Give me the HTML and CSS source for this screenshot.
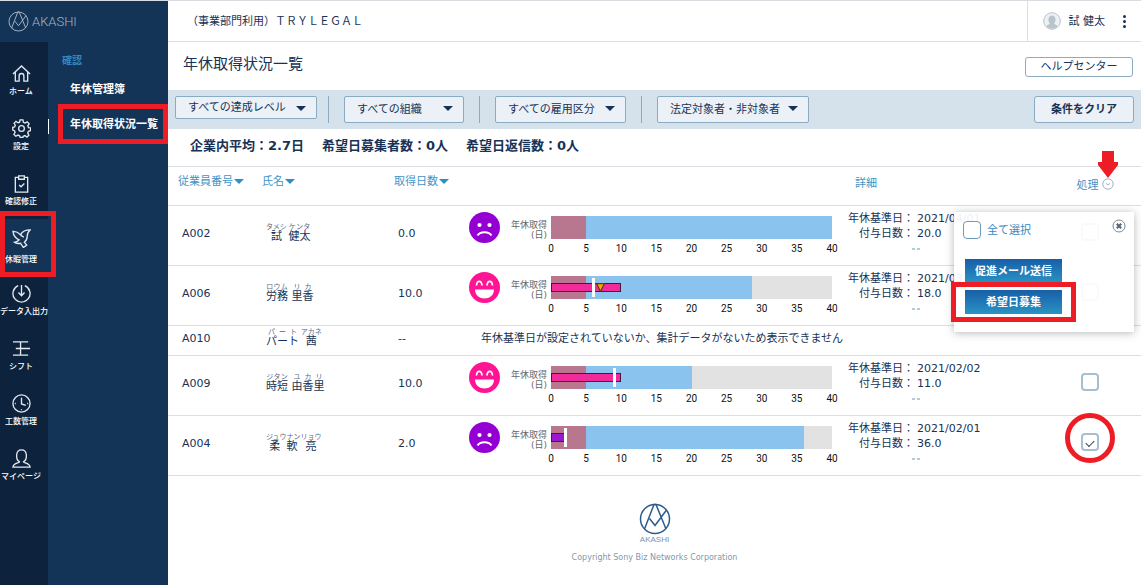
FILE: index.html
```html
<!DOCTYPE html>
<html lang="ja">
<head>
<meta charset="utf-8">
<title>年休取得状況一覧 - AKASHI</title>
<meta name="viewport" content="width=device-width, initial-scale=1">
<link rel="stylesheet" href="styles.css">
</head>
<body>
<svg class="defs" aria-hidden="true">
  <symbol id="mark" viewBox="0 0 32 32">
    <circle cx="16" cy="16" r="14.5"/>
    <path d="M5.500 26 15 1.500h2L27 26M10.500 15.500 16 22.500 27.500 7"/>
  </symbol>
  <symbol id="sad" viewBox="0 0 31 31">
    <circle cx="15.500" cy="15.500" r="15.500" fill="#9400d3"/>
    <circle cx="10.500" cy="13" r="2.100" fill="#fff"/><circle cx="20.500" cy="13" r="2.100" fill="#fff"/>
    <path d="M8.500 23.500c2.500-4.500 11.500-4.500 14 0" fill="none" stroke="#fff" stroke-width="2"/>
  </symbol>
  <symbol id="happy" viewBox="0 0 31 31">
    <circle cx="15.500" cy="15.500" r="15.500" fill="#ff1493"/>
    <path d="M7.500 13.500c.5-5.500 5-5.500 5.500 0M18 13.500c.5-5.500 5-5.500 5.500 0" fill="none" stroke="#fff" stroke-width="1.700"/>
    <path d="M6 17.500h19c0 12-19 12-19 0z" fill="#fff"/>
  </symbol>
</svg>
<div class="app">
  <aside class="side">
    <a class="brand" href="#" aria-label="AKASHI"><svg class="brand-mark" aria-hidden="true"><use href="#mark"/></svg><span>AKASHI</span></a>
    <div class="side-body">
      <nav class="rail" aria-label="メイン">
        <a href="#"><svg viewBox="0 0 20 20"><path d="M1 10.500 10 2l9 8.500M3.500 8.500V18h4v-5.500a2.500 2.500 0 0 1 5 0V18h4V8.500"/></svg><span>ホーム</span></a>
        <a class="marked" href="#"><svg viewBox="0 0 20 20"><circle cx="10" cy="10" r="3"/><path d="M8.500 1h3l.5 2.500 1.800.8L16 3l2 2-1.400 2.200.8 1.800 2.100.4v2.900l-2.200.6-.8 1.700L17.800 17l-2 2-2.200-1.500-1.700.7-.5 1.300H8.600L8 17.700l-1.800-.8L4 18.200l-2-2L3.300 14l-.7-1.700L.8 11.700V8.800l2-.5.7-1.700L2.200 4.500l2-2 2.200 1.400 1.600-.6z"/></svg><span>設定</span></a>
        <a href="#"><svg viewBox="0 0 20 20"><path d="M7 3.500H3.500V19h13V3.500H13M7 2h6v3.500H7zM7.500 11.500l2 2 3.500-3.500"/></svg><span>確認修正</span></a>
        <a class="current" href="#" aria-current="page"><svg viewBox="0 0 20 20"><path d="M1 2.500c3-.3 5.500 1 8 3.500 2-3.500 5-5 10-5-2.500 2-3 4-3 7 0 2.500-1 4.500-3 6l2.500 3-3.500 2.500-3-4.500c-2.500.5-5 .3-6.500-1C5 13.700 6.500 13 7.500 11.500 4 10 1.500 6.500 1 2.500z"/><path d="M9 6c.8 1.300 2 2.200 3.500 2.500"/></svg><span>休暇管理</span></a>
        <a href="#"><svg viewBox="0 0 20 20"><path d="M6.500 1.700a9 9 0 1 0 7 0M10 1v11M6.800 9l3.200 3.300L13.200 9"/></svg><span>データ入出力</span></a>
        <a href="#"><svg viewBox="0 0 20 20"><path d="M1 3h16M4 10h15M1 17h16M9 3v14"/></svg><span>シフト</span></a>
        <a href="#"><svg viewBox="0 0 20 20"><circle cx="10" cy="10" r="9"/><path d="M10 4v6.500l4.500 1.500M3 10h1M16 10h1M10 16v1"/></svg><span>工数管理</span></a>
        <a href="#"><svg viewBox="0 0 20 20"><path d="M8 13.500C3.500 11 3.500 1 10 1s6.500 10 2 12.500c0 1.500 6.500 1 7 5.500H1c.5-4.500 7-4 7-5.500z"/></svg><span>マイページ</span></a>
      </nav>
      <nav class="submenu" aria-label="確認">
        <h2>確認</h2>
        <a href="#">年休管理簿</a>
        <a class="boxed" href="#">年休取得状況一覧</a>
      </nav>
    </div>
  </aside>
  <div class="main">
    <header class="topbar">
      <span class="company">（事業部門利用）ＴＲＹＬＥＧＡＬ</span>
      <div class="user">
        <svg class="avatar" viewBox="0 0 18 18" aria-hidden="true"><circle cx="9" cy="9" r="8.300" fill="#eef1f3" stroke="#b9c3ca"/><path d="M6.800 11.500C4.500 9 5 3.500 9 3.500s4.500 5.500 2.200 8c.3 1.200 2.800 1 3.300 2.700-2.700 3.300-8.300 3.300-11 0 .5-1.700 3-1.500 3.300-2.700z" fill="#b9c3ca"/></svg>
        <span>試 健太</span>
        <button class="more" type="button" aria-label="メニュー"><i></i><i></i><i></i></button>
      </div>
    </header>
    <div class="titlebar">
      <h1>年休取得状況一覧</h1>
      <button class="help" type="button">ヘルプセンター</button>
    </div>
    <form class="filters">
      <span class="pick pick-level"><select aria-label="達成レベル"><option>すべての達成レベル</option></select></span>
      <span class="pick pick-org"><select aria-label="組織"><option>すべての組織</option></select></span>
      <span class="pick pick-type"><select aria-label="雇用区分"><option>すべての雇用区分</option></select></span>
      <span class="pick pick-target"><select aria-label="対象者"><option>法定対象者・非対象者</option></select></span>
      <button class="clear" type="reset">条件をクリア</button>
    </form>
    <p class="summary"><span>企業内平均：2.7日</span><span>希望日募集者数：0人</span><span>希望日返信数：0人</span></p>
    <div class="list">
      <table>
        <colgroup><col class="c-id"><col class="c-name"><col class="c-days"><col><col class="c-detail"><col class="c-act"></colgroup>
        <thead>
          <tr><th class="sort">従業員番号</th><th class="sort">氏名</th><th class="sort">取得日数</th><th></th><th class="th-detail">詳細</th>
          <th class="th-act">処理<button class="expand" type="button" aria-label="処理メニュー"><svg viewBox="0 0 12 12"><circle cx="6" cy="6" r="5.200"/><path d="M4 5.200 6 7l2-1.800"/></svg></button>
            <svg class="arrow" viewBox="0 0 20 27" aria-hidden="true"><path d="M4 0h12v11h4v3L10 27 0 14v-3h4z"/></svg></th></tr>
        </thead>
        <tbody>
          <tr>
            <td>A002</td><td><ruby>試<rt>タメシ</rt></ruby> <ruby>健太<rt>ケンタ</rt></ruby></td><td>0.0</td>
            <td><div class="graph"><svg class="face"><use href="#sad"/></svg><span class="axis">年休取得<br>(日)</span>
              <div class="plot"><div class="bar"><b class="duty"></b><b class="granted" style="width:87.5%"></b></div>
              <div class="scale"><i>0</i><i>5</i><i>10</i><i>15</i><i>20</i><i>25</i><i>30</i><i>35</i><i>40</i></div></div></div></td>
            <td><dl><dt>年休基準日：</dt><dd>2021/04/01</dd><dt>付与日数：</dt><dd>20.0</dd></dl><svg class="dots" viewBox="0 0 8 3"><path d="M0 0h3v2H0zM5 0h3v2H5z"/></svg></td>
            <td><input type="checkbox" aria-label="A002を選択"></td>
          </tr>
          <tr>
            <td>A006</td><td><ruby>労務<rt>ロウム</rt></ruby> <ruby>里香<rt>リカ</rt></ruby></td><td>10.0</td>
            <td><div class="graph"><svg class="face"><use href="#happy"/></svg><span class="axis">年休取得<br>(日)</span>
              <div class="plot"><div class="bar"><b class="duty"></b><b class="granted" style="width:58.9%"></b><b class="taken" style="width:25%"></b><b class="goal" style="left:15%"></b><svg class="now" style="left:17.5%" viewBox="0 0 8 8"><path d="M.5.5h7L4 7.500z"/></svg></div>
              <div class="scale"><i>0</i><i>5</i><i>10</i><i>15</i><i>20</i><i>25</i><i>30</i><i>35</i><i>40</i></div></div></div></td>
            <td><dl><dt>年休基準日：</dt><dd>2021/03/01</dd><dt>付与日数：</dt><dd>18.0</dd></dl><svg class="dots" viewBox="0 0 8 3"><path d="M0 0h3v2H0zM5 0h3v2H5z"/></svg></td>
            <td><input type="checkbox" aria-label="A006を選択"></td>
          </tr>
          <tr class="short">
            <td>A010</td><td><ruby>パート<rt>パート</rt></ruby> <ruby>茜<rt>アカネ</rt></ruby></td><td>--</td>
            <td class="message" colspan="3">年休基準日が設定されていないか、集計データがないため表示できません</td>
          </tr>
          <tr>
            <td>A009</td><td><ruby>時短<rt>ジタン</rt></ruby> <ruby>由香里<rt>ユカリ</rt></ruby></td><td>10.0</td>
            <td><div class="graph"><svg class="face"><use href="#happy"/></svg><span class="axis">年休取得<br>(日)</span>
              <div class="plot"><div class="bar"><b class="duty"></b><b class="granted" style="width:37.5%"></b><b class="taken" style="width:25%"></b><b class="goal" style="left:22.5%"></b></div>
              <div class="scale"><i>0</i><i>5</i><i>10</i><i>15</i><i>20</i><i>25</i><i>30</i><i>35</i><i>40</i></div></div></div></td>
            <td><dl><dt>年休基準日：</dt><dd>2021/02/02</dd><dt>付与日数：</dt><dd>11.0</dd></dl><svg class="dots" viewBox="0 0 8 3"><path d="M0 0h3v2H0zM5 0h3v2H5z"/></svg></td>
            <td><input type="checkbox" aria-label="A009を選択"></td>
          </tr>
          <tr>
            <td>A004</td><td><ruby>柔軟<rt>ジュウナン</rt></ruby> <ruby>亮<rt>リョウ</rt></ruby></td><td>2.0</td>
            <td><div class="graph"><svg class="face"><use href="#sad"/></svg><span class="axis">年休取得<br>(日)</span>
              <div class="plot"><div class="bar"><b class="duty"></b><b class="granted" style="width:77.5%"></b><b class="taken low" style="width:5%"></b><b class="goal" style="left:5%"></b></div>
              <div class="scale"><i>0</i><i>5</i><i>10</i><i>15</i><i>20</i><i>25</i><i>30</i><i>35</i><i>40</i></div></div></div></td>
            <td><dl><dt>年休基準日：</dt><dd>2021/02/01</dd><dt>付与日数：</dt><dd>36.0</dd></dl><svg class="dots" viewBox="0 0 8 3"><path d="M0 0h3v2H0zM5 0h3v2H5z"/></svg></td>
            <td class="ringed"><input type="checkbox" aria-label="A004を選択" checked></td>
          </tr>
        </tbody>
      </table>
      <div class="popover" role="dialog" aria-label="処理">
        <div class="pop-head">
          <label><input type="checkbox">全て選択</label>
          <button class="close" type="button" aria-label="閉じる"><svg viewBox="0 0 14 14"><circle cx="7" cy="7" r="6" fill="none" stroke="#7b8792"/><path d="m4.800 4.800 4.400 4.400M9.200 4.800 4.800 9.200" stroke="#5c6874" stroke-width="2.200"/></svg></button>
        </div>
        <button class="action" type="button">促進メール送信</button>
        <button class="action boxed" type="button">希望日募集</button>
      </div>
    </div>
    <footer>
      <svg class="foot-mark" aria-hidden="true"><use href="#mark"/></svg>
      <span class="foot-name">AKASHI</span>
      <small>Copyright Sony Biz Networks Corporation</small>
    </footer>
  </div>
</div>
</body>
</html>
```
FILE: styles.css
```css
*, *::before, *::after { box-sizing: border-box; }

body {
  margin: 0;
  color: #163256;
  background: #fff;
  font: 11px/15px "DejaVu Sans", "Noto Sans CJK JP", sans-serif;
}

a { color: inherit; text-decoration: none; }
h1, h2, p, dl, dd { margin: 0; }
i { font-style: normal; }

button, select, input { font: inherit; color: inherit; }
button { padding: 0; cursor: pointer; }

.defs { position: absolute; width: 0; height: 0; }

.app {
  display: flex;
  min-height: 100vh;
  border-top: 1px solid #d9dce1;
}

/* Sidebar */
.side {
  flex: none;
  display: flex;
  flex-direction: column;
  width: 168px;
  color: #fff;
  background: #133457;
}

.brand {
  display: flex;
  align-items: center;
  gap: 3px;
  height: 41px;
  padding-left: 8px;
  color: #a3b2c3;
  font: 300 13px/16px Roboto, sans-serif;
}

.brand-mark { width: 21px; height: 21px; fill: none; stroke: #a3b2c3; stroke-width: 1.5; }

.side-body { flex: 1; display: flex; }

.rail {
  width: 48px;
  padding-top: 12px;
  background: #0d233d;
  font-size: 8px;
  font-weight: 500;
  line-height: 12px;
}

.rail a {
  position: relative;
  display: flex;
  flex-direction: column;
  align-items: safe center;
  gap: 3px;
  height: 55px;
  padding: 10px 6px 0 0;
  white-space: nowrap;
}

.rail svg { flex: none; width: 19px; height: 19px; fill: none; stroke: #e4e9ee; stroke-width: 1.4; }

.rail .marked::after {
  content: "";
  position: absolute;
  top: 10px;
  right: -1px;
  width: 1px;
  height: 15px;
  background: #fff;
}

.rail .current { gap: 6px; background: #133457; }

.rail .current::after {
  content: "";
  position: absolute;
  inset: -8px -8px -3px 0;
  z-index: 2;
  border: 5px solid #ee1c24;
}

.submenu { flex: 1; padding-top: 11px; font-weight: 700; }
.submenu h2 { padding-left: 14px; color: #3687bd; font-size: 10px; line-height: 15px; }
.submenu a { position: relative; display: block; padding: 10px 0 10px 22px; white-space: nowrap; }
.submenu h2 + a { padding-top: 14px; }

.submenu .boxed::after {
  content: "";
  position: absolute;
  inset: -3px 0 -2px 10px;
  border: 5px solid #ee1c24;
}

/* Header */
.main { flex: 1; min-width: 0; }

.topbar {
  display: flex;
  justify-content: space-between;
  height: 41px;
  padding-left: 19px;
  border-bottom: 1px solid #dbdfe5;
}

.company { align-self: center; }

.user {
  display: flex;
  align-items: center;
  gap: 8px;
  padding: 0 13px 0 15px;
  border-left: 1px solid #dbdfe5;
}

.avatar { width: 18px; height: 18px; }

.more {
  display: grid;
  gap: 2px;
  margin-left: 8px;
  padding: 2px;
  border: 0;
  background: none;
}

.more i { width: 3px; height: 3px; border-radius: 50%; background: #163256; }

.titlebar {
  display: flex;
  align-items: flex-start;
  justify-content: space-between;
  height: 48px;
  padding: 11px 8px 0 15px;
}

h1 { font-size: 15px; font-weight: 400; line-height: 22px; }

.help, .clear { border: 1px solid #8aabc2; border-radius: 3px; background: #fff; }
.help { width: 108px; height: 20px; margin-top: 4px; line-height: 16px; }

/* Filters */
.filters {
  display: flex;
  align-items: flex-start;
  height: 39px;
  padding: 6px 7px;
  background: #d5e2eb;
}

.pick { position: relative; display: flex; }

.pick + .pick { margin-left: 15px; padding-left: 15px; border-left: 1px solid #8aabc2; }
.pick + .pick-org { margin-left: 11px; }

.pick::after {
  content: "";
  position: absolute;
  top: 10px;
  right: 11px;
  border: solid transparent;
  border-width: 5px 5px 0;
  border-top-color: #163256;
  pointer-events: none;
}

.pick select {
  appearance: none;
  height: 27px;
  padding: 0 12px;
  border: 1px solid #8aabc2;
  border-radius: 2px;
  background: #ebf1f6;
}

.pick-level select { width: 142px; height: 23px; }
.pick-org select { width: 120px; }
.pick-type select { width: 131px; }
.pick-target select { width: 152px; }

.clear { width: 100px; height: 27px; margin-left: auto; background: #ebf1f6; font-weight: 700; line-height: 20px; }

.summary {
  display: flex;
  gap: 18px;
  height: 37px;
  padding: 8px 22px;
  font-size: 13px;
  font-weight: 700;
  line-height: 18px;
}

/* Employee list */
.list { position: relative; border-top: 1px solid #dbdfe5; }

table { width: 100%; border-collapse: collapse; table-layout: fixed; }
.c-id { width: 94px; }
.c-name { width: 128px; }
.c-days { width: 76px; }
.c-detail { width: 198px; }
.c-act { width: 103px; }

th {
  height: 38px;
  padding: 0 0 8px;
  border-bottom: 1px solid #dbdfe5;
  color: #4593c3;
  font-weight: 400;
  text-align: left;
  white-space: nowrap;
}

.sort:first-child { padding-left: 10px; }
.sort:nth-child(3) { padding-left: 4px; }

.sort::after {
  content: "";
  display: inline-block;
  margin-left: 1px;
  border: solid transparent;
  border-width: 5px 5px 0;
  border-top-color: #2b8fc9;
  vertical-align: 1px;
}

.th-detail { padding: 0 0 4px 15px; }
.th-act { position: relative; padding: 0 0 0 11px; text-align: center; }

.expand { margin-left: 3px; border: 0; background: none; vertical-align: -1px; }
.expand svg { display: block; width: 12px; height: 12px; fill: none; stroke: #9fb4c2; }

.arrow { position: absolute; top: -16px; right: 23px; width: 20px; height: 27px; fill: #ee1c24; }

td { height: 60px; padding: 0 0 3px; border-bottom: 1px solid #dbdfe5; }
.short td { height: 30px; }
td:first-child { padding-left: 14px; }
td:nth-child(2) { padding-left: 4px; }
td:nth-child(3) { padding-left: 8px; }
td:nth-child(4) { padding-bottom: 0; }
td:nth-child(5) { padding-top: 5px; vertical-align: top; }
td:nth-child(6) { padding-bottom: 6px; text-align: center; }
td.message { padding: 0 0 3px 15px; }

ruby { ruby-align: space-around; }
rt { color: #5d6b80; font-size: 7px; line-height: 8px; }

.graph { display: flex; height: 59px; padding: 6px 8px 0 3px; }
.face { flex: none; width: 31px; height: 31px; }

.axis {
  flex: none;
  width: 51px;
  padding: 8px 4px 0 0;
  color: #666;
  font-size: 9px;
  line-height: 10px;
  text-align: right;
}

.plot { flex: 1; padding-top: 4px; }
.bar { position: relative; display: flex; height: 23px; background: #e2e2e2; }
.duty { width: 12.5%; background: #b8768f; }
.granted { background: #8bc3ef; }

.taken {
  position: absolute;
  top: 7px;
  left: 0;
  height: 9px;
  border: 1px solid #4c1440;
  background: #f02c9b;
}

.taken.low { background: #9b19cd; }

.goal { position: absolute; top: 2px; width: 3px; height: 19px; margin-left: -1px; background: #fff; }

.now {
  position: absolute;
  top: 7px;
  width: 9px;
  height: 9px;
  margin-left: -4px;
  fill: #ffa500;
  stroke: #5a3a10;
}

.scale {
  display: flex;
  justify-content: space-between;
  padding-top: 4px;
  color: #111;
  font: 10px/12px Roboto, sans-serif;
}

.scale i { display: flex; justify-content: center; width: 0; }

dl { display: grid; grid-template-columns: 74px 1fr; column-gap: 3px; }
dt { text-align: right; white-space: nowrap; }
.dots { display: block; width: 8px; height: 3px; margin: 7px 0 0 72px; fill: #b3cbd9; }

input[type="checkbox"] {
  appearance: none;
  display: inline-grid;
  place-items: center;
  width: 18px;
  height: 18px;
  margin: 0;
  border: 2px solid #a5bfd0;
  border-radius: 4px;
  background: #fff;
  vertical-align: middle;
}

input[type="checkbox"]:checked::after {
  content: "";
  width: 8px;
  height: 5px;
  border: solid #2a4260;
  border-width: 0 0 1px 1px;
  transform: rotate(-45deg);
}

.ringed { position: relative; }

.ringed::after {
  content: "";
  position: absolute;
  top: 50%;
  left: 50%;
  width: 50px;
  height: 50px;
  margin: -32px 0 0 -25px;
  border: 5px solid #ee1c24;
  border-radius: 50%;
  pointer-events: none;
}

/* Bulk action popover */
.popover {
  position: absolute;
  top: 45px;
  right: 7px;
  display: flex;
  flex-direction: column;
  align-items: flex-start;
  gap: 7px;
  width: 180px;
  height: 120px;
  padding: 9px 8px 18px 9px;
  background: rgba(255, 255, 255, .92);
  box-shadow: 0 1px 8px rgba(40, 50, 60, .35);
}

.pop-head {
  flex: 1;
  align-self: stretch;
  display: flex;
  justify-content: space-between;
  align-items: flex-start;
}

.pop-head label { display: flex; align-items: center; gap: 6px; color: #3489c0; }
.pop-head input[type="checkbox"] { border-width: 1px; border-color: #6d9ab8; }
.close { margin-top: -2px; border: 0; background: none; }
.close svg { display: block; width: 14px; height: 14px; }

.action {
  position: relative;
  width: 97px;
  height: 24px;
  margin-left: 2px;
  border: 0;
  color: #fff;
  background: linear-gradient(#185ea8, #2a93c4);
  font-weight: 700;
}

.action.boxed::after {
  content: "";
  position: absolute;
  inset: -8px -14px;
  border: 5px solid #ee1c24;
}

/* Footer */
footer {
  display: flex;
  flex-direction: column;
  align-items: center;
  padding: 27px 0 16px;
  color: #8299ad;
}

.foot-mark { width: 32px; height: 32px; fill: none; stroke: #2d5c8c; stroke-width: 1.5; }
.foot-name { color: #7a92ab; font: 8px/9px "Liberation Sans", sans-serif; }
footer small { margin-top: 8px; font: 8px/12px "DejaVu Sans", sans-serif; }
```
